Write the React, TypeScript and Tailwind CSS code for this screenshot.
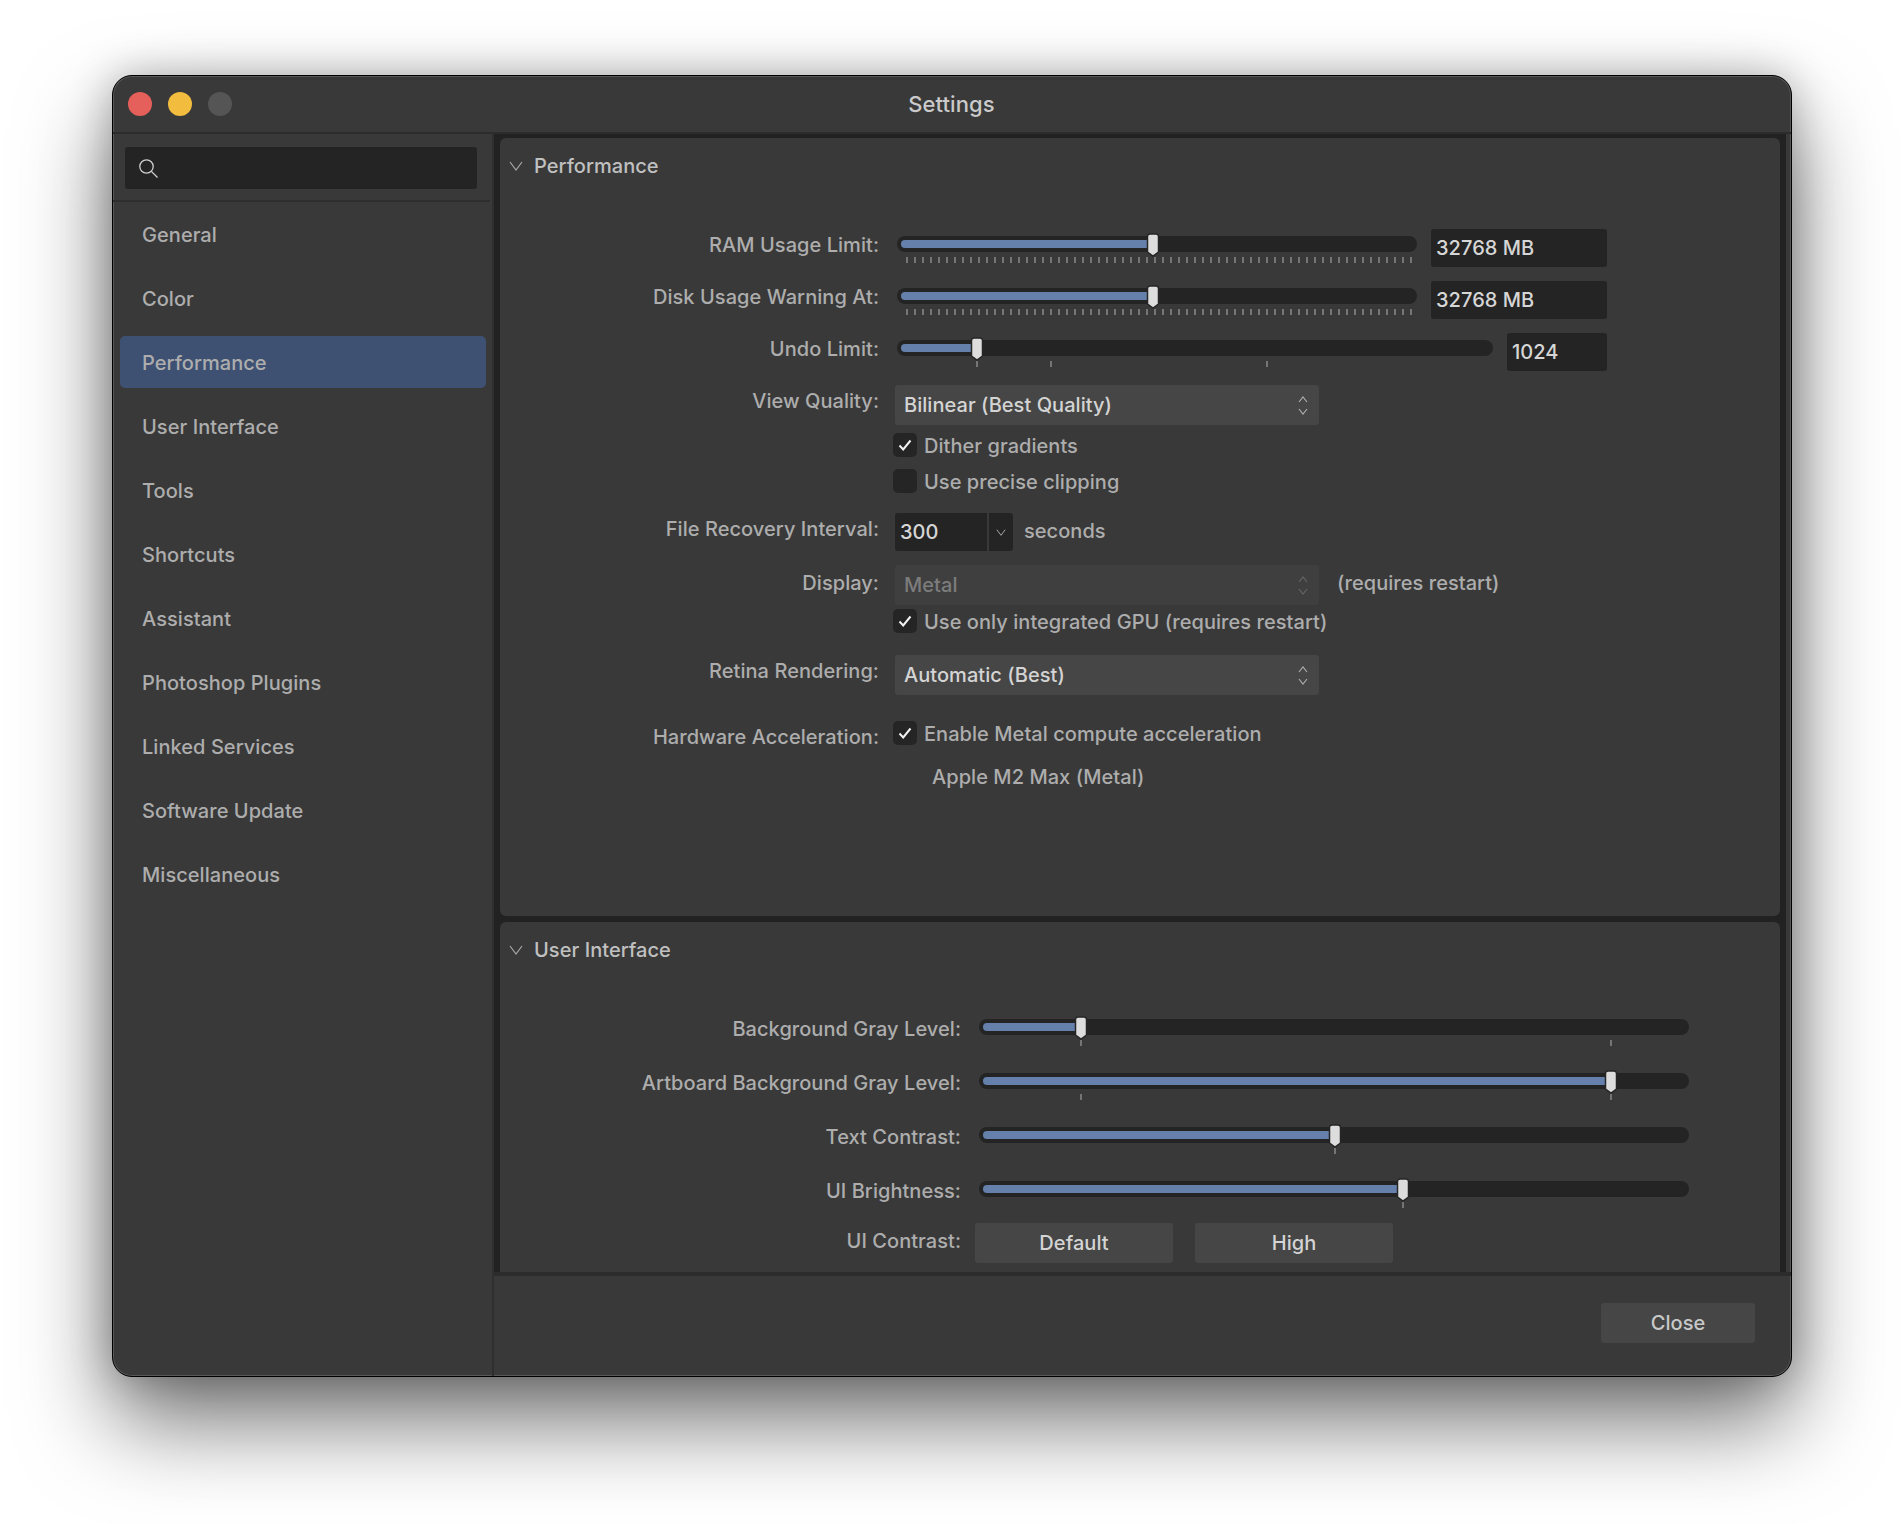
const nav = ["General", "Color", "Performance", "User Interface", "Tools", "Shortcuts", "Assistant", "Photoshop Plugins", "Linked Services", "Software Update", "Miscellaneous"];

function Chevron({ className, c = "#a8a8a8" }: { className: string; c?: string }) {
  return (
    <svg className={className} viewBox="0 0 14 10" fill="none" stroke={c} strokeWidth="1.2">
      <path d="M1 1l6 8 6-8" />
    </svg>
  );
}

function Stepper({ dim }: { dim?: boolean }) {
  const c = dim ? "#666666" : "#b0b0b0";
  return (
    <svg className="w-[10px] h-[19px] shrink-0" viewBox="0 0 10 19" fill="none" stroke={c} strokeWidth="1.1">
      <path d="M1 6l4-5 4 5" />
      <path d="M1 13l4 5 4-5" />
    </svg>
  );
}

function Thumb({ x }: { x: number }) {
  return (
    <svg className="absolute top-[-3px] w-[14px] h-[24px]" style={{ left: x - 7 }} viewBox="0 0 14 24">
      <path d="M4 1h6a2.5 2.5 0 0 1 2.5 2.5V19L7 23.2 1.5 19V3.5A2.5 2.5 0 0 1 4 1z" fill="#dddddd" stroke="#262626" strokeWidth="1.5" />
    </svg>
  );
}

function Slider({ width, value, ticks = [], dense }: { width: number; value: number; ticks?: number[]; dense?: boolean }) {
  return (
    <div className="relative h-4 shrink-0" style={{ width }}>
      <div className="h-4 rounded-full bg-[#242424] p-[4px]">
        <div className="h-2 rounded-l-full bg-[#6480ab]" style={{ width: value - 4 }} />
      </div>
      {ticks.map((t) => (
        <div key={t} className="absolute top-[21px] w-[2px] h-[6px] bg-[#757575]" style={{ left: t - 1 }} />
      ))}
      {dense && (
        <div className="absolute top-[21px] left-[9px] flex gap-[6px]">
          {Array.from({ length: 64 }, (_, i) => (
            <div key={i} className="w-[2px] h-[6px] bg-[#757575]" />
          ))}
        </div>
      )}
      <Thumb x={value} />
    </div>
  );
}

function Label({ children, w, pt }: { children: string; w: string; pt: string }) {
  return <div className={`${w} ${pt} shrink-0 text-right leading-6 text-[#adadad] whitespace-nowrap`}>{children}</div>;
}

function Input({ children, w, ml = "ml-[14px]" }: { children: string; w: string; ml?: string }) {
  return <div className={`${w} h-[38px] ${ml} pl-[5px] rounded-[3px] bg-[#242424] text-[#d6d6d6] leading-[38px]`}>{children}</div>;
}

function Select({ children, dim }: { children: string; dim?: boolean }) {
  return (
    <div className={`ml-4 w-[424px] h-10 pl-[9px] pr-[11px] rounded-[3px] flex items-center justify-between ${dim ? "bg-[#3f3f3f] text-[#7c7c7c]" : "bg-[#464646] text-[#d4d4d4]"}`}>
      <span>{children}</span>
      <Stepper dim={dim} />
    </div>
  );
}

function Check({ children, on }: { children: string; on?: boolean }) {
  return (
    <div className="flex items-center ml-[14px] h-6 text-[#adadad]">
      <div className="w-6 h-6 rounded-[5px] bg-[#252525] flex items-center justify-center mr-[7px]">
        {on && (
          <svg className="w-[14px] h-[12px]" viewBox="0 0 14 12" fill="none" stroke="#f2f2f2" strokeWidth="2">
            <path d="M1.5 6.5l3.7 4L12.5 1.5" />
          </svg>
        )}
      </div>
      <span className="whitespace-nowrap pt-[2px] leading-6">{children}</span>
    </div>
  );
}

function Header({ children }: { children: string }) {
  return (
    <div className="flex items-center pt-[14px] h-[42px] pl-[9px] text-[#c0c0c0] leading-7">
      <Chevron className="w-[14px] h-[10px] mr-[11px]" />
      <span>{children}</span>
    </div>
  );
}

const col1 = "w-[379px]";
const col2 = "w-[461px]";

export default function App() {
  return (
    <div className="w-[1904px] h-[1524px] bg-white pt-[75px] pl-[112px] overflow-hidden font-['Inter',sans-serif] text-[20px] font-[450] tracking-[0.05px] antialiased">
      <div className="w-[1680px] h-[1302px] flex flex-col bg-[#393939] border border-black rounded-[20px] overflow-hidden shadow-[0_45px_90px_rgba(0,0,0,0.55),0_0_40px_rgba(0,0,0,0.25),inset_0_0_0_1px_rgba(255,255,255,0.16)]">
        <div className="h-[58px] shrink-0 grid grid-cols-[1fr_auto_1fr] items-center pl-[15px] pr-[16px] border-b-2 border-[#2c2c2c]">
          <div className="flex gap-4">
            <div className="w-6 h-6 rounded-full bg-[#e5605b]" />
            <div className="w-6 h-6 rounded-full bg-[#f2bd3f]" />
            <div className="w-6 h-6 rounded-full bg-[#555555]" />
          </div>
          <div className="text-[#cacaca] text-[22px] tracking-[0.1px]">Settings</div>
          <div />
        </div>
        <div className="flex flex-1 min-h-0">
          <div className="w-[381px] shrink-0 border-r-2 border-[#2f2f2f]">
            <div className="h-[68px] mr-[2px] pt-[13px] pl-3 border-b-2 border-[#2e2e2e]">
              <div className="w-[352px] h-[42px] bg-[#242424] rounded-[3px] flex items-center pl-[14px]">
                <svg className="w-[19px] h-[19px]" viewBox="0 0 19 19" fill="none" stroke="#d0d0d0" strokeWidth="1.3">
                  <circle cx="7.5" cy="7.5" r="6.7" />
                  <path d="M12.4 12.4L18.5 18.5" />
                </svg>
              </div>
            </div>
            <div className="pt-[6px] pl-[7px] pr-[6px] flex flex-col gap-3">
              {nav.map((n) => (
                <div key={n} className={`h-[52px] pl-[22px] pt-[2px] flex items-center rounded-[5px] text-[#adadad] ${n === "Performance" ? "bg-[#3e5173]" : ""}`}>
                  {n}
                </div>
              ))}
            </div>
          </div>
          <div className="flex-1 min-w-0 flex flex-col">
            <div className="h-[1138px] shrink-0 mr-[5px] bg-[#222222] pt-1 px-[6px] flex flex-col gap-[6px] overflow-hidden">
              <div className="h-[778px] shrink-0 bg-[#393939] rounded-md">
                <Header>Performance</Header>
                <div className="h-[49px]" />
                <div className="h-[52px] flex">
                  <Label w={col1} pt="pt-1">RAM Usage Limit:</Label>
                  <div className="ml-[18px] pt-[7px]"><Slider width={520} value={256} dense /></div>
                  <Input w="w-[176px]">32768 MB</Input>
                </div>
                <div className="h-[52px] flex">
                  <Label w={col1} pt="pt-1">Disk Usage Warning At:</Label>
                  <div className="ml-[18px] pt-[7px]"><Slider width={520} value={256} dense /></div>
                  <Input w="w-[176px]">32768 MB</Input>
                </div>
                <div className="h-[52px] flex">
                  <Label w={col1} pt="pt-1">Undo Limit:</Label>
                  <div className="ml-[18px] pt-[7px]"><Slider width={596} value={80} ticks={[80, 154, 370]} /></div>
                  <Input w="w-[100px]">1024</Input>
                </div>
                <div className="h-[48px] flex">
                  <Label w={col1} pt="pt-1">View Quality:</Label>
                  <Select>Bilinear (Best Quality)</Select>
                </div>
                <div className="h-[36px] flex">
                  <div className={col1} />
                  <Check on>Dither gradients</Check>
                </div>
                <div className="h-[44px] flex">
                  <div className={col1} />
                  <Check>Use precise clipping</Check>
                </div>
                <div className="h-[52px] flex">
                  <Label w={col1} pt="pt-1">File Recovery Interval:</Label>
                  <div className="ml-4 h-[38px] flex text-[#d6d6d6]">
                    <div className="w-[92px] bg-[#242424] rounded-l-[3px] pl-[5px] leading-[38px]">300</div>
                    <div className="w-6 ml-[2px] bg-[#242424] rounded-r-[3px] flex items-center justify-center">
                      <Chevron className="w-[10px] h-[7px]" c="#bdbdbd" />
                    </div>
                  </div>
                  <div className="ml-[11px] leading-[36px] text-[#adadad]">seconds</div>
                </div>
                <div className="h-[44px] flex">
                  <Label w={col1} pt="pt-[6px]">Display:</Label>
                  <Select dim>Metal</Select>
                  <div className="ml-[18px] pt-[6px] leading-6 text-[#adadad]">(requires restart)</div>
                </div>
                <div className="h-[46px] flex">
                  <div className={col1} />
                  <Check on>Use only integrated GPU (requires restart)</Check>
                </div>
                <div className="h-[66px] flex">
                  <Label w={col1} pt="pt-1">Retina Rendering:</Label>
                  <Select>Automatic (Best)</Select>
                </div>
                <div className="h-[44px] flex">
                  <Label w={col1} pt="pt-1">Hardware Acceleration:</Label>
                  <Check on>Enable Metal compute acceleration</Check>
                </div>
                <div className="flex">
                  <div className={col1} />
                  <div className="ml-[53px] leading-6 text-[#adadad]">Apple M2 Max (Metal)</div>
                </div>
              </div>
              <div className="h-[350px] shrink-0 bg-[#393939] rounded-t-md">
                <Header>User Interface</Header>
                <div className="h-[51px]" />
                <div className="h-[54px] flex">
                  <Label w={col2} pt="pt-[2px]">Background Gray Level:</Label>
                  <div className="ml-[18px] pt-1"><Slider width={710} value={102} ticks={[102, 632]} /></div>
                </div>
                <div className="h-[54px] flex">
                  <Label w={col2} pt="pt-[2px]">Artboard Background Gray Level:</Label>
                  <div className="ml-[18px] pt-1"><Slider width={710} value={632} ticks={[102, 632]} /></div>
                </div>
                <div className="h-[54px] flex">
                  <Label w={col2} pt="pt-[2px]">Text Contrast:</Label>
                  <div className="ml-[18px] pt-1"><Slider width={710} value={356} ticks={[356]} /></div>
                </div>
                <div className="h-[46px] flex">
                  <Label w={col2} pt="pt-[2px]">UI Brightness:</Label>
                  <div className="ml-[18px] pt-1"><Slider width={710} value={424} ticks={[424]} /></div>
                </div>
                <div className="flex">
                  <Label w={col2} pt="pt-[6px]">UI Contrast:</Label>
                  <div className="ml-[14px] flex gap-[22px] text-[#d4d4d4]">
                    <div className="w-[198px] h-10 rounded-[3px] bg-[#464646] flex items-center justify-center">Default</div>
                    <div className="w-[198px] h-10 rounded-[3px] bg-[#464646] flex items-center justify-center">High</div>
                  </div>
                </div>
              </div>
            </div>
            <div className="flex-1 border-t-4 border-[#2c2c2c] flex justify-end pt-[27px] pr-[36px]">
              <div className="w-[154px] h-10 rounded-[3px] bg-[#464646] flex items-center justify-center text-[#c8c8c8]">Close</div>
            </div>
          </div>
        </div>
      </div>
    </div>
  );
}
